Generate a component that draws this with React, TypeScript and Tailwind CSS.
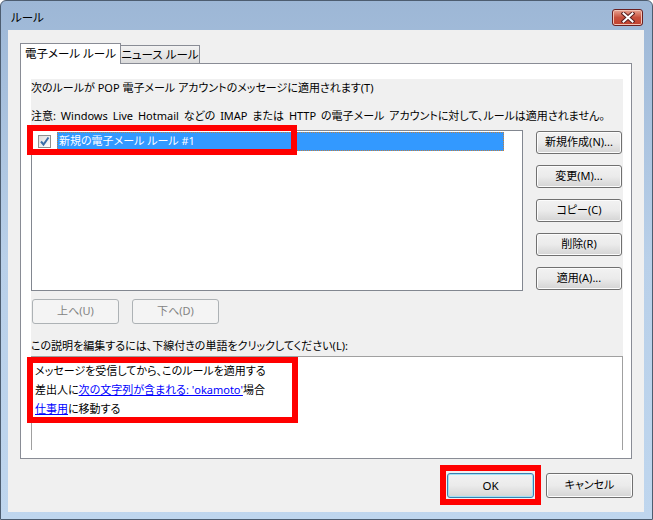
import React from 'react';

const font = "font-['Noto_Sans','Noto_Sans_CJK_JP',sans-serif] [font-feature-settings:'palt']";

const btn =
  'flex items-center justify-center whitespace-nowrap rounded-[3px] border border-[#707070] bg-linear-to-b from-[#f2f2f2] via-[#ebebeb] to-[#d4d4d4] shadow-[inset_0_0_0_1px_#fcfcfc] text-[11px] text-black';

const btnDisabled =
  'flex items-center justify-center whitespace-nowrap rounded-[3px] border border-[#adb2b5] bg-[#f4f4f4] text-[11px] text-[#838383]';

const SideButton = ({ label }: { label: string }) => (
  <div className={`${btn} w-[86px] h-[23px]`}>{label}</div>
);

const CloseButton = () => (
  <div className="w-[31px] h-[17px] rounded-[3px] border border-[#6b2020] bg-linear-to-b from-[#e8a493] via-[#c7503d] to-[#c2402c] shadow-[inset_0_0_0_1px_#f2c2b5] flex items-center justify-center">
    <svg width="14" height="11" viewBox="0 0 14 11">
      <path d="M2.5 1.5 L11.5 9.5 M11.5 1.5 L2.5 9.5" stroke="#5a2020" strokeWidth="4" strokeLinecap="square" />
      <path d="M2.5 1.5 L11.5 9.5 M11.5 1.5 L2.5 9.5" stroke="#ffffff" strokeWidth="2" strokeLinecap="square" />
    </svg>
  </div>
);

const Checkbox = () => (
  <div className="w-[13px] h-[13px] border border-[#8e8f8f] bg-linear-to-br from-[#dcdcdc] to-[#ffffff] flex items-center justify-center">
    <svg width="11" height="11" viewBox="0 0 11 11">
      <path d="M2 5.5 L4.5 8.5 L9.5 1.5" stroke="#3d6fa8" strokeWidth="2" fill="none" />
    </svg>
  </div>
);

const App = () => {
  return (
    <div className={`${font} relative w-[653px] h-[520px] overflow-hidden rounded-t-[6px] border border-[#4d5d70] bg-linear-to-b from-[#9db7d6] via-[#b9d0e9] to-[#bfd6ee] flex flex-col`}>
      {/* title bar */}
      <div className="h-[29px] flex items-center justify-between pl-[10px] pr-[9px] pt-[4px]">
        <span className="text-[11.5px] text-black">ルール</span>
        <CloseButton />
      </div>

      {/* client area */}
      <div className="ml-[7px] mr-[8px] h-[482px] bg-[#f0f0f0] pt-[13px] pl-[12px] flex flex-col">
        {/* tabs */}
        <div className="h-[21px] flex items-end -mb-px">
          <div className="relative z-10 h-[21px] w-[101px] border border-b-0 border-[#898c95] bg-white flex items-center justify-center whitespace-nowrap text-[11.5px] text-black">
            電子メール ルール
          </div>
          <div className="h-[19px] w-[79px] border border-b-0 border-l-0 border-[#898c95] bg-linear-to-b from-[#f2f2f2] to-[#d9d9d9] flex items-center justify-center whitespace-nowrap text-[11.5px] text-black">
            ニュース ルール
          </div>
        </div>

        {/* tab panel */}
        <div className="w-[612px] h-[396px] border border-[#898c95] bg-white pt-[15px] pl-[10px]">
          <div className="w-[592px] h-[277px] bg-[#f0f0f0] flex flex-col text-[11px] text-black">
            <div className="h-[17px] leading-[17px] whitespace-nowrap">
              次のルールが POP 電子メール アカウントのメッセージに適用されます(T)
            </div>
            <div className="mt-[11px] h-[17px] leading-[17px] whitespace-nowrap [word-spacing:2px]">
              注意: Windows Live Hotmail などの IMAP または HTTP の電子メール アカウントに対して、ルールは適用されません。
            </div>

            <div className="mt-[6px] flex">
              <div className="w-[492px] h-[161px] border border-[#828790] bg-white pt-[1px]">
                <div className="h-[19px] flex items-center pl-[6px]">
                  <Checkbox />
                  <div className="ml-[6px] w-[447px] h-[19px] bg-[#3399ff] border border-dotted border-[#c08040] text-white flex items-center pl-[1px] whitespace-nowrap">
                    新規の電子メール ルール #1
                  </div>
                </div>
              </div>
              <div className="ml-[13px] mt-[1px] flex flex-col gap-[11px]">
                <SideButton label="新規作成(N)..." />
                <SideButton label="変更(M)..." />
                <SideButton label="コピー(C)" />
                <SideButton label="削除(R)" />
                <SideButton label="適用(A)..." />
              </div>
            </div>

            <div className="mt-[8px] flex gap-[13px] pl-[1px]">
              <div className={`${btnDisabled} w-[87px] h-[25px]`}>上へ(U)</div>
              <div className={`${btnDisabled} w-[87px] h-[25px]`}>下へ(D)</div>
            </div>

            <div className="mt-[13px] h-[17px] leading-[17px] whitespace-nowrap">
              この説明を編集するには、下線付きの単語をクリックしてください(L):
            </div>
          </div>

          {/* description */}
          <div className="w-[592px] h-[94px] border border-b-0 border-[#a0a0a0] bg-white pt-[4px] pl-[3px] text-[11px] text-black">
            <div className="h-[19px] leading-[19px] whitespace-nowrap">メッセージを受信してから、このルールを適用する</div>
            <div className="h-[19px] leading-[19px] whitespace-nowrap">
              差出人に<span className="text-[#0000ff] underline">次の文字列が含まれる: 'okamoto'</span>場合
            </div>
            <div className="h-[19px] leading-[19px] whitespace-nowrap">
              <span className="text-[#0000ff] underline">仕事用</span>に移動する
            </div>
          </div>
        </div>

        {/* bottom buttons */}
        <div className="mt-[14px] flex justify-end gap-[12px] pr-[11px]">
          <div className="w-[87px] h-[25px] rounded-[3px] border border-[#3c7fb1] bg-linear-to-b from-[#f2f2f2] via-[#ebebeb] to-[#d4d4d4] shadow-[inset_0_0_0_1px_#9fe2f5] flex items-center justify-center text-[11.5px] text-black">
            OK
          </div>
          <div className={`${btn} w-[87px] h-[25px]`}>キャンセル</div>
        </div>
      </div>

      {/* red annotations */}
      <div className="absolute left-[26px] top-[124px] w-[270px] h-[30px] border-[6px] border-[#ff0000]" />
      <div className="absolute left-[26px] top-[356px] w-[271px] h-[66px] border-[6px] border-[#ff0000]" />
      <div className="absolute left-[439px] top-[464px] w-[101px] h-[40px] border-[6px] border-[#ff0000]" />
    </div>
  );
};

export default App;
